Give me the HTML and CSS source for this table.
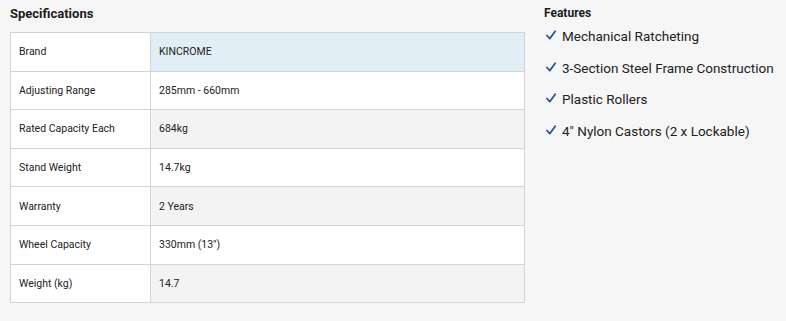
FILE: index.html
```html
<!DOCTYPE html>
<html>
<head>
<meta charset="utf-8">
<link rel="stylesheet" href="styles.css">
</head>
<body>
<div class="page">
  <section class="specs">
    <h2 class="title">Specifications</h2>
    <table class="spec-table">
      <tr class="r-blue"><td>Brand</td><td>KINCROME</td></tr>
      <tr class="r-white"><td>Adjusting Range</td><td>285mm - 660mm</td></tr>
      <tr class="r-grey"><td>Rated Capacity Each</td><td>684kg</td></tr>
      <tr class="r-white"><td>Stand Weight</td><td>14.7kg</td></tr>
      <tr class="r-grey"><td>Warranty</td><td>2 Years</td></tr>
      <tr class="r-white"><td>Wheel Capacity</td><td>330mm (13")</td></tr>
      <tr class="r-grey"><td>Weight (kg)</td><td>14.7</td></tr>
    </table>
  </section>
  <section class="features">
    <h3 class="ftitle">Features</h3>
    <ul class="flist">
      <li><svg class="check" viewBox="0 0 10 10"><polyline points="1,5.5 3.8,8.6 9.2,1.2"/></svg>Mechanical Ratcheting</li>
      <li><svg class="check" viewBox="0 0 10 10"><polyline points="1,5.5 3.8,8.6 9.2,1.2"/></svg>3-Section Steel Frame Construction</li>
      <li><svg class="check" viewBox="0 0 10 10"><polyline points="1,5.5 3.8,8.6 9.2,1.2"/></svg>Plastic Rollers</li>
      <li><svg class="check" viewBox="0 0 10 10"><polyline points="1,5.5 3.8,8.6 9.2,1.2"/></svg>4" Nylon Castors (2 x Lockable)</li>
    </ul>
  </section>
</div>
</body>
</html>
```
FILE: styles.css
```css
html, body {
  margin: 0;
  padding: 0;
  background: #f6f6f6;
  font-family: Roboto, "Noto Sans", sans-serif;
  color: #222;
}
.page {
  display: flex;
  padding: 5px 0 0 10px;
}
.specs {
  width: 515px;
}
.title {
  margin: 0 0 9px 0;
  font-size: 13px;
  font-weight: 700;
  line-height: 18px;
  color: #1c1c1c;
}
.spec-table {
  width: 515px;
  border-collapse: collapse;
  font-size: 10.5px;
  color: #222;
}
.spec-table td {
  border: 1px solid #d4d4d4;
  height: 37.6px;
  padding: 0 0 0 8px;
  vertical-align: middle;
}
.spec-table td:first-child {
  width: 131px;
  background: #fff;
}
.r-blue td:last-child { background: #e1eef5; }
.r-white td:last-child { background: #fff; }
.r-grey td:last-child { background: #f3f3f3; }
.features {
  margin-left: 19px;
}
.ftitle {
  margin: 0;
  font-size: 12px;
  font-weight: 700;
  line-height: 16px;
  color: #1c1c1c;
}
.flist {
  list-style: none;
  margin: 0;
  padding: 0;
}
.flist li {
  display: flex;
  align-items: center;
  font-size: 13.5px;
  line-height: 31.5px;
  height: 31.5px;
  margin-top: -6px;
  margin-bottom: 6px;
  color: #222;
}
.flist li:first-child { margin-top: 0; }
.check {
  width: 10px;
  height: 10px;
  margin: -3px 6px 0 2px;
  fill: none;
  stroke: #2a56a8;
  stroke-width: 1.8;
  stroke-linecap: round;
  stroke-linejoin: round;
}
```
